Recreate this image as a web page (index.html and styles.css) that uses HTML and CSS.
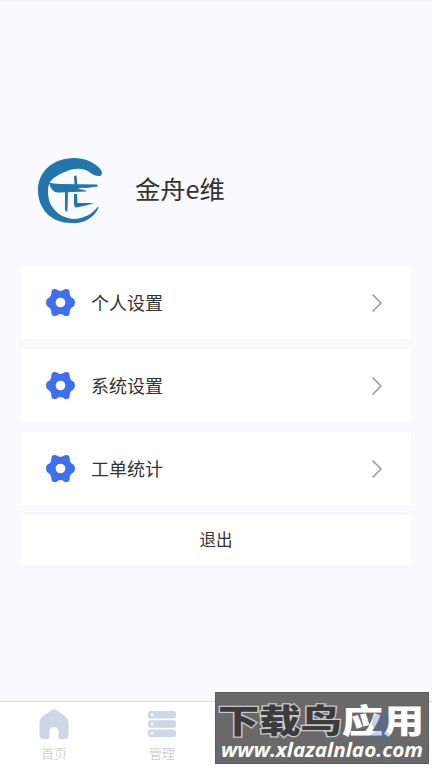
FILE: index.html
```html
<!DOCTYPE html>
<html lang="zh-CN">
<head>
<meta charset="utf-8">
<meta name="viewport" content="width=device-width, initial-scale=1">
<title>金舟e维</title>
<link rel="stylesheet" href="styles.css">
</head>
<body>
<svg class="defs" aria-hidden="true">
  <symbol id="gear" viewBox="-14 -14 28 28">
    <path fill-rule="evenodd" d="M-8.8-10.5Q-8.6-13-6.3-13Q-4.4-13.4-3.2-12.2Q0-10 3.2-12.2Q4.4-13.4 6.3-13Q8.6-13 8.8-10.5Q8.4-5.8 12.4-3.8Q14-2.8 14 0Q14 2.8 12.4 3.8Q8.4 5.8 8.8 10.5Q8.6 13 6.3 13Q4.4 13.4 3.2 12.2Q0 10-3.2 12.2Q-4.4 13.4-6.3 13Q-8.6 13-8.8 10.5Q-8.4 5.8-12.4 3.8Q-14 2.8-14 0Q-14-2.8-12.4-3.8Q-8.4-5.8-8.8-10.5ZM4.7 0A4.7 4.7 0 1 0-4.7 0A4.7 4.7 0 1 0 4.7 0Z"/>
  </symbol>
  <symbol id="chevron" viewBox="0 0 12 20">
    <path d="M1.5 1.5 10 10 1.5 18.5"/>
  </symbol>
</svg>
<div class="screen">
  <header class="profile">
    <svg class="logo" viewBox="0 0 66 68">
      <path d="M64 18.5Q60 20 55 17C49 11 38 10 29 14.5C20 18 14 22 12 27Q10 34 12 43C15 54 26 62 38 62C49 61 56 56 60.5 50Q62 49 61 52C55 63 44 67 34 66C16 66 2 54 1 35C0 15 16 1 37 1C49 1 59 6 64 13Q66 16 64 18.5Z"/>
      <path d="M11.5 25.5Q16 26.5 23 27L60 27.5 61 29.5 49 31Q44 30 41 32Q51 33 49 34.5L22 35.5Q17 36 14 31Z"/>
      <path d="M37 19 39.5 18.5 40.5 28 37.5 28ZM28 35 31 35 30.5 52 30 55 28 53ZM37 37 40 37 40.5 46 57 46 49 48.5 39 50.5Q37 50 37 46Z"/>
    </svg>
    <h1 class="name">金舟e维</h1>
  </header>
  <main class="menu">
    <a class="row"><svg class="gear"><use href="#gear"/></svg><span class="label">个人设置</span><svg class="chevron"><use href="#chevron"/></svg></a>
    <a class="row"><svg class="gear"><use href="#gear"/></svg><span class="label">系统设置</span><svg class="chevron"><use href="#chevron"/></svg></a>
    <a class="row"><svg class="gear"><use href="#gear"/></svg><span class="label">工单统计</span><svg class="chevron"><use href="#chevron"/></svg></a>
    <a class="logout">退出</a>
  </main>
  <nav class="tabs">
    <a class="tab">
      <svg class="tab-icon" viewBox="0 0 30 30"><path d="M12 1.5Q15-.5 18 1.5L27 8Q29.5 10 29.5 13V26Q29.5 30 25.5 30H19.5V22.5A4.5 4.5 0 0 0 10.5 22.5V30H4.5Q.5 30 .5 26V13Q.5 10 3 8Z"/></svg>
      <span>首页</span>
    </a>
    <a class="tab">
      <svg class="tab-icon" viewBox="0 0 30 30"><rect x="1" y="2" width="28" height="7.4" rx="2.5"/><rect x="1" y="11.3" width="28" height="7.4" rx="2.5"/><rect x="1" y="20.6" width="28" height="7.4" rx="2.5"/><g class="dots"><circle cx="5" cy="5.7" r="1.4"/><circle cx="5" cy="15" r="1.4"/><circle cx="5" cy="24.3" r="1.4"/></g></svg>
      <span>管理</span>
    </a>
  </nav>
  <aside class="badge">
    <div class="brand"><span class="dark">下载鸟</span><span class="light">应用</span></div>
    <svg class="person" viewBox="0 0 28 28"><path d="M5 11Q6 1 14 1Q22 1 22 11Q22 16 18 19Q26 22 28 28H1Q2 22 9 19Q5 16 5 11Z"/></svg>
    <div class="site">www.xlazalnlao.com</div>
  </aside>
</div>
</body>
</html>
```
FILE: styles.css
```css
* { box-sizing: border-box; }
body { margin: 0; background: #f8faff; font-family: "Noto Sans CJK SC", sans-serif; color: #333; }
.defs { position: absolute; width: 0; height: 0; }
.screen { position: relative; height: 768px; display: flex; flex-direction: column; overflow: hidden; border-top: 1px solid #f0f1f4; }
.profile { height: 265px; padding: 156px 0 0 37px; display: flex; align-items: flex-start; gap: 32px; }
.logo { width: 66px; height: 68px; fill: #2376aa; }
.name { margin: 12px 0 0; font-size: 25.3px; line-height: 38px; font-weight: 400; }
.menu { display: flex; flex-direction: column; gap: 10px; padding: 0 21px; }
.row, .logout { background: #fff; border-radius: 2px; box-shadow: 0 0 3px #f3f5fb; }
.row { height: 73px; padding: 0 28px 0 25px; display: flex; align-items: center; }
.gear { width: 29px; height: 29px; fill: #3d6ff0; }
.label { flex: 1; margin: -2px 0 0 16px; font-size: 18px; line-height: 26px; }
.chevron { width: 12px; height: 20px; fill: none; stroke: #999; stroke-width: 1.5; }
.logout { height: 50px; padding-bottom: 3px; display: flex; align-items: center; justify-content: center; font-size: 16.5px; }
.tabs { height: 67px; margin-top: auto; display: grid; grid-template-columns: repeat(4, 1fr); background: #fff; border-top: 1px solid #d4d8de; }
.tab { display: flex; flex-direction: column; align-items: center; padding-top: 7px; font: 13px/20px "Liberation Serif", "Noto Sans CJK SC", serif; color: #c2c2c4; }
.tab span { margin-top: 5px; font-weight: 300; }
.tab-icon { width: 30px; height: 30px; fill: #cdd7e8; }
.dots { fill: #fff; }
.badge { position: absolute; left: 215px; top: 691px; width: 214px; height: 72px; padding: 10px 0 0 2px; background: #696969; border: 1px solid #5c5c5c; white-space: nowrap; }
.brand { width: 170px; font-weight: 900; font-size: 33px; line-height: 33px; transform: scaleX(1.25); transform-origin: 0 0; }
.dark { color: #3c3c3c; -webkit-text-stroke: 2.4px #c9c9c9; paint-order: stroke fill; }
.light { color: #fff; }
.person { position: absolute; left: 151px; top: 19px; width: 28px; height: 28px; fill: #4569bd; opacity: .3; }
.site { margin: 3px 0 0 3px; width: 188px; font: italic 700 19px/22px "Open Sans", sans-serif; color: #fff; transform: scaleX(1.09); transform-origin: 0 0; }
```
